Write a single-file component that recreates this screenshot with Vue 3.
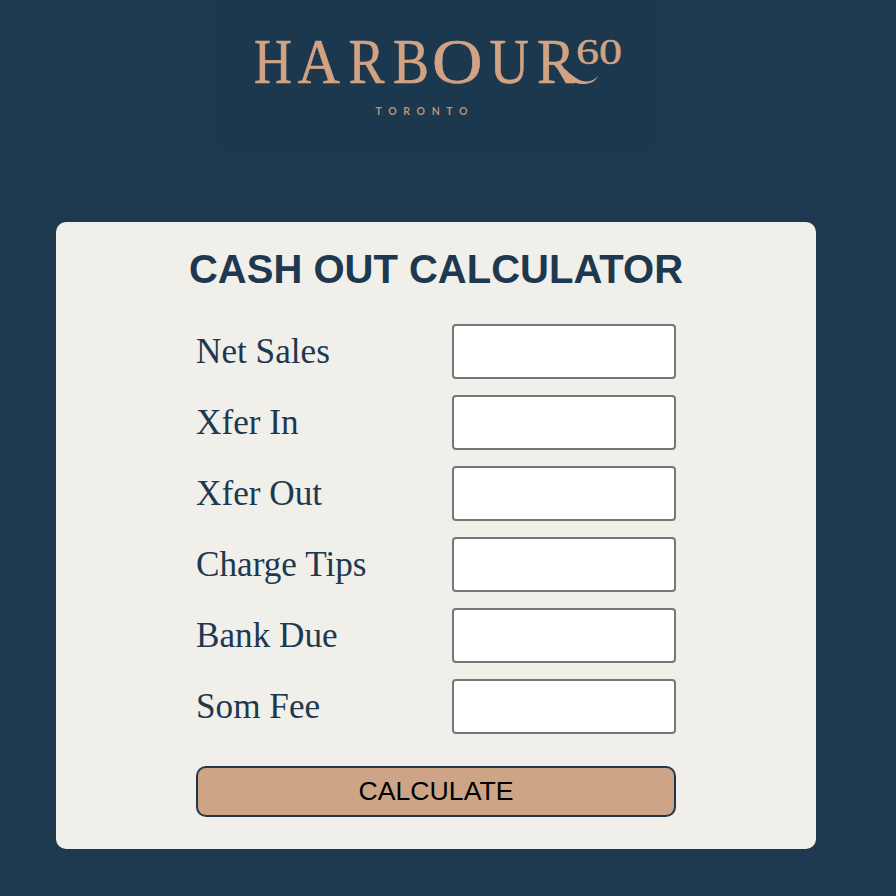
<script setup>
import { reactive } from 'vue'

const fields = [
  { id: 'netSales', label: 'Net Sales' },
  { id: 'xferIn', label: 'Xfer In' },
  { id: 'xferOut', label: 'Xfer Out' },
  { id: 'chargeTips', label: 'Charge Tips' },
  { id: 'bankDue', label: 'Bank Due' },
  { id: 'somFee', label: 'Som Fee' },
]
const values = reactive({})

// Wordmark letters: horizontal start and advance of each one
const letters = [
  { c: 'H', x: 35, w: 38 },
  { c: 'A', x: 78.5, w: 42.5 },
  { c: 'R', x: 129.5, w: 36 },
  { c: 'B', x: 174, w: 36 },
  { c: 'O', x: 213, w: 50.5 },
  { c: 'U', x: 270.5, w: 39.5 },
  { c: 'R', x: 318, w: 38 },
]
</script>

<template>
  <div class="page">
    <header class="brand">
      <svg class="logo" viewBox="0 0 434 150" role="img" aria-label="Harbour 60 Toronto">
        <text class="wordmark" y="82.6"><tspan
          v-for="(l, i) in letters"
          :key="i"
          :x="l.x"
          :textLength="l.w"
          lengthAdjust="spacingAndGlyphs"
        >{{ l.c }}</tspan></text>
        <path class="swash" d="M340 64C350 72 357 81 367 81.5C373 81.5 376 79 379 76C376 82 371 84 364 84C353 84 346 77 334 64Z" />
        <text class="sixty" x="357" y="64" textLength="46" lengthAdjust="spacingAndGlyphs">60</text>
        <text class="city" x="156.5" y="115" textLength="92" lengthAdjust="spacing">TORONTO</text>
      </svg>
    </header>
    <main class="card">
      <h1>CASH OUT CALCULATOR</h1>
      <form @submit.prevent>
        <div v-for="f in fields" :key="f.id" class="row">
          <label :for="f.id">{{ f.label }}</label>
          <input :id="f.id" v-model="values[f.id]" type="text" />
        </div>
        <button type="submit">CALCULATE</button>
      </form>
    </main>
  </div>
</template>

<style>
body {
  margin: 0;
  background: #1e384f;
}
</style>

<style scoped>
.page {
  box-sizing: border-box;
  width: 872px;
  height: 896px;
  display: flex;
  flex-direction: column;
  align-items: center;
  gap: 72px;
}
.brand {
  width: 434px;
  height: 150px;
  background: #1c384e;
}
.logo {
  display: block;
  width: 434px;
  height: 150px;
  fill: #d2a382;
}
.wordmark {
  font: 63px "Liberation Serif", serif;
  stroke: #d2a382;
  stroke-width: 0.6px;
}
.sixty {
  font: 35px "Liberation Serif", serif;
  stroke: #d2a382;
  stroke-width: 0.4px;
}
.city {
  font: bold 10.5px Lato, sans-serif;
  opacity: 0.85;
}
.card {
  box-sizing: border-box;
  width: 760px;
  height: 627px;
  padding: 24px 140px 0;
  border-radius: 10px;
  background: #f0efea;
  color: #1e384f;
}
h1 {
  margin: 0 -20px;
  font: bold 40px/46px "Liberation Sans", Arial, sans-serif;
  text-align: center;
  white-space: nowrap;
}
form {
  display: flex;
  flex-direction: column;
  gap: 16px;
  margin-top: 32px;
}
.row {
  display: flex;
  justify-content: space-between;
  align-items: center;
  height: 55px;
}
label {
  font: 35.2px/55px "Liberation Serif", "Times New Roman", serif;
}
input {
  box-sizing: border-box;
  width: 224px;
  height: 55px;
  padding: 2px 4px;
  border: 2px solid #767676;
  border-radius: 4px;
  background: #fff;
  font: 35.2px "Liberation Serif", serif;
  outline: none;
}
button {
  box-sizing: border-box;
  height: 51px;
  margin-top: 16px;
  padding: 0;
  border: 2px solid #1e384f;
  border-radius: 10px;
  background: #cda586;
  color: #000;
  font: 26.667px "Liberation Sans", Arial, sans-serif;
}
</style>
